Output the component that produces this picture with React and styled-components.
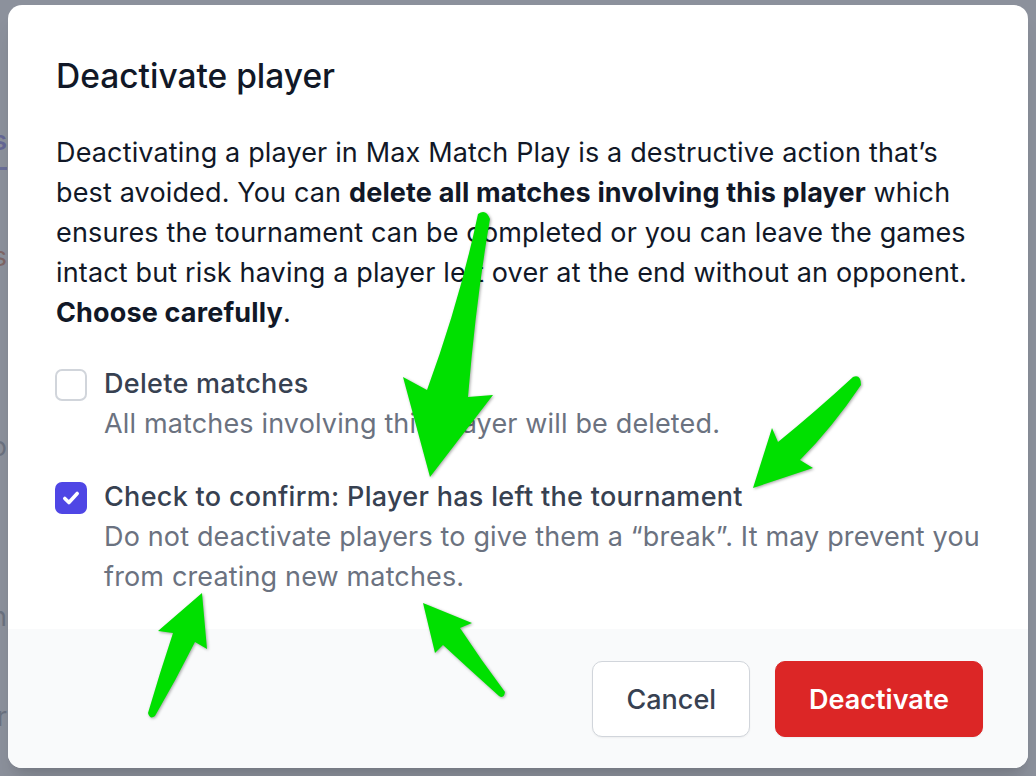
import React, { useState } from 'react';
import styled, { createGlobalStyle } from 'styled-components';

const GlobalStyle = createGlobalStyle`
  html, body { margin: 0; padding: 0; }
  body {
    font-family: Inter, "Noto Sans", "Liberation Sans", sans-serif;
    -webkit-font-smoothing: antialiased;
  }
  * { box-sizing: border-box; }
`;

//page behind the dialog
const Page = styled.div`
  position: relative;
  width: 1036px;
  height: 776px;
  overflow: hidden;
  background: #ffffff;
`;

const Behind = styled.div`
  display: flex;
  flex-direction: column;
  padding-top: 124px;
`;

const BehindRow = styled.div`
  display: flex;
  justify-content: flex-end;
  width: 7px;
  height: ${p => p.$h}px;
  white-space: nowrap;
  font-size: 27px;
  font-weight: ${p => p.$bold ? 600 : 400};
  color: ${p => p.$color || '#6b7280'};
  border-bottom: ${p => p.$line ? `3px solid ${p.$line}` : 'none'};
`;

const Overlay = styled.div`
  position: absolute;
  inset: 0;
  display: flex;
  align-items: flex-start;
  padding: 5px 8px 0 8px;
  background: rgba(107, 114, 128, 0.78);
`;

//dialog
const Modal = styled.div`
  width: 1020px;
  height: 763px;
  display: flex;
  flex-direction: column;
  background: #ffffff;
  border-radius: 14px;
  overflow: hidden;
  box-shadow: 0 20px 25px -5px rgba(0,0,0,0.1), 0 8px 10px -6px rgba(0,0,0,0.1);
`;

const Content = styled.div`
  flex: 1;
  padding: 47px 48px 0 48px;
`;

const Title = styled.h3`
  margin: 0;
  font-size: 33.5px;
  line-height: 48px;
  font-weight: 500;
  color: #111827;
`;

const Text = styled.p`
  margin: 33px 0 0 0;
  font-size: 27px;
  line-height: 40px;
  letter-spacing: 0.15px;
  color: #111827;
  b { font-weight: 700; }
`;

const Options = styled.div`
  display: flex;
  flex-direction: column;
  gap: 33px;
  margin-top: 31px;
`;

const Option = styled.label`
  display: flex;
  align-items: flex-start;
  gap: 17px;
  cursor: pointer;
`;

const Box = styled.span`
  flex: none;
  display: flex;
  align-items: center;
  justify-content: center;
  width: 32px;
  height: 32px;
  margin-top: 5px;
  margin-left: -1px;
  border-radius: 7px;
  border: ${p => p.$checked ? 'none' : '2px solid #d1d5db'};
  background: ${p => p.$checked ? '#4f46e5' : '#ffffff'};
`;

const OptionText = styled.div`
  display: flex;
  flex-direction: column;
  font-size: 27px;
  line-height: 40px;
  letter-spacing: 0.15px;
`;

const OptionLabel = styled.span`
  font-weight: 500;
  letter-spacing: 0.3px;
  color: #374151;
`;

const OptionHint = styled.span`
  color: #6b7280;
`;

const Footer = styled.div`
  display: flex;
  justify-content: flex-end;
  gap: 25px;
  height: 139px;
  padding: 32px 45px 0 0;
  background: #f9fafb;
`;

const Button = styled.button`
  height: 76px;
  padding: 0 33px;
  border-radius: 10px;
  font-family: inherit;
  font-size: 27px;
  cursor: pointer;
  border: ${p => p.$danger ? '1.5px solid #dc2626' : '1.5px solid #d1d5db'};
  background: ${p => p.$danger ? '#dc2626' : '#ffffff'};
  color: ${p => p.$danger ? '#ffffff' : '#374151'};
  font-weight: ${p => p.$danger ? 600 : 500};
  box-shadow: 0 1px 2px rgba(0,0,0,0.05);
`;

//annotation layer
const Arrows = styled.svg`
  position: absolute;
  inset: 0;
  pointer-events: none;
  filter: drop-shadow(1px 1px 1.5px rgba(0,0,0,0.35));
`;

const Check = () => (
  <svg width="22" height="22" viewBox="0 0 16 16" fill="none">
    <path d="M3.5 8.3l3 3 6-6.6" stroke="#fff" strokeWidth="2.6" strokeLinecap="round" strokeLinejoin="round" />
  </svg>
);

const arrows = [
  'M478 214 Q460 300 427 390 L403 377 L430 477 L493 395 L468 397 Q476 300 490 219 Q486 208 478 214 Z',
  'M853 377 Q815 412 778 442 L772 428 L753 488 L813 468 L800 460 Q832 428 861 385 Q861 374 853 377 Z',
  'M148 713 Q160 672 173 633 L158 631 L202 593 L207 649 L195 642 Q176 680 155 716 Q150 720 148 713 Z',
  'M423 603 L472 623 L460 628 Q481 660 505 692 Q504 699 499 696 Q470 670 443 645 L435 653 Z',
];

const App = () => {
  const [deleteMatches, setDeleteMatches] = useState(false);
  const [confirmed, setConfirmed] = useState(true);

  return (
    <Page>
      <GlobalStyle />
      <Behind>
        <BehindRow $h={46} $color="#4f46e5" $bold $line="#6366f1">Players</BehindRow>
        <BehindRow $h={70} />
        <BehindRow $h={50} $color="#c2410c">Matches</BehindRow>
        <BehindRow $h={140} />
        <BehindRow $h={170} $color="#6b7280">Info</BehindRow>
        <BehindRow $h={100} $color="#6b7280">Jordan</BehindRow>
        <BehindRow $h={40} $color="#6b7280">Archer</BehindRow>
      </Behind>

      <Overlay>
        <Modal>
          <Content>
            <Title>Deactivate player</Title>
            <Text>
              Deactivating a player in Max Match Play is a destructive action that’s best avoided. You
              can <b>delete all matches involving this player</b> which ensures the tournament can be
              completed or you can leave the games intact but risk having a player left over at the
              end without an opponent. <b>Choose carefully</b>.
            </Text>
            <Options>
              <Option onClick={() => setDeleteMatches(!deleteMatches)}>
                <Box $checked={deleteMatches}>{deleteMatches && <Check />}</Box>
                <OptionText>
                  <OptionLabel>Delete matches</OptionLabel>
                  <OptionHint>All matches involving this player will be deleted.</OptionHint>
                </OptionText>
              </Option>
              <Option onClick={() => setConfirmed(!confirmed)}>
                <Box $checked={confirmed}>{confirmed && <Check />}</Box>
                <OptionText>
                  <OptionLabel>Check to confirm: Player has left the tournament</OptionLabel>
                  <OptionHint>
                    Do not deactivate players to give them a “break”. It may prevent you from creating
                    new matches.
                  </OptionHint>
                </OptionText>
              </Option>
            </Options>
          </Content>
          <Footer>
            <Button>Cancel</Button>
            <Button $danger>Deactivate</Button>
          </Footer>
        </Modal>
      </Overlay>

      <Arrows width="1036" height="776" viewBox="0 0 1036 776">
        {arrows.map((d, i) => (
          <path key={i} d={d} fill="#00e000" />
        ))}
      </Arrows>
    </Page>
  );
};

export default App;
